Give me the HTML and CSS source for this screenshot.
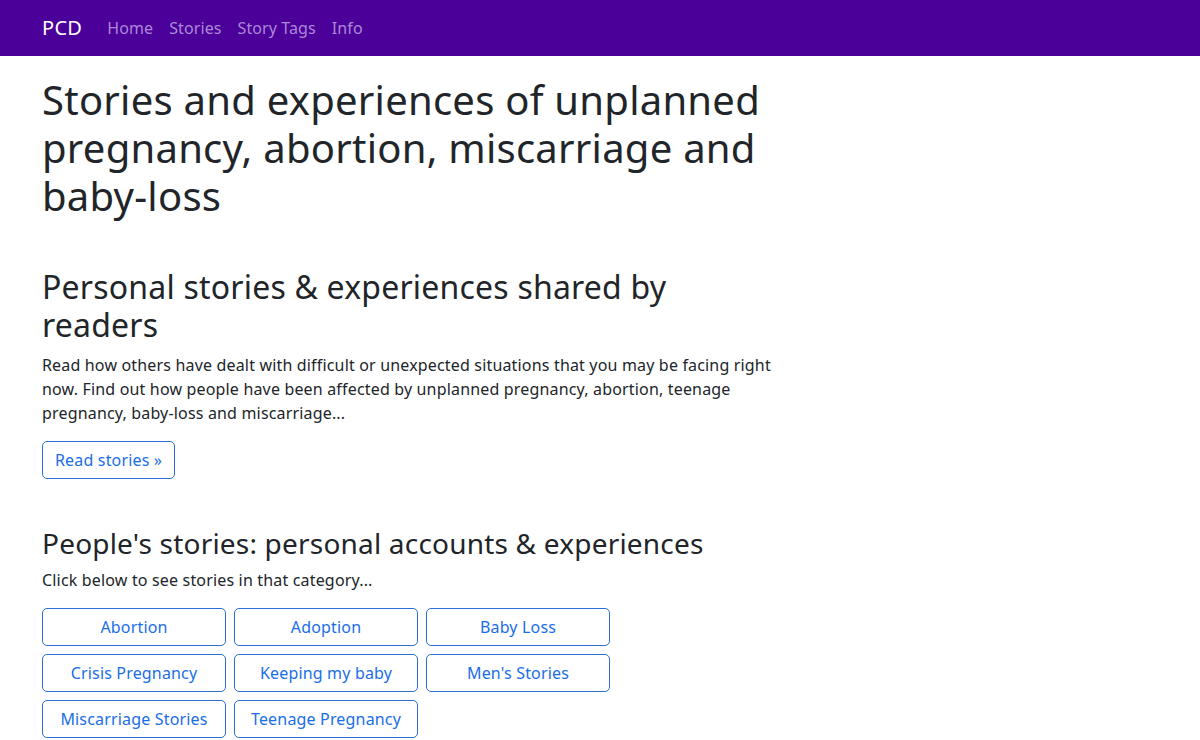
FILE: index.html
```html
<!DOCTYPE html>
<html lang="en">
<head>
<meta charset="utf-8">
<title>PCD - Stories and experiences</title>
<link rel="stylesheet" href="styles.css">
</head>
<body>
<nav class="navbar">
  <div class="container nav-inner">
    <a class="brand" href="#">PCD</a>
    <ul class="nav-links">
      <li><a href="#">Home</a></li>
      <li><a href="#">Stories</a></li>
      <li><a href="#">Story Tags</a></li>
      <li><a href="#">Info</a></li>
    </ul>
  </div>
</nav>
<main class="container">
  <div class="col">
    <h1 class="title">Stories and experiences of unplanned pregnancy, abortion, miscarriage and baby-loss</h1>
    <section class="section first">
      <h2 class="sub">Personal stories &amp; experiences shared by readers</h2>
      <p class="text">Read how others have dealt with difficult or unexpected situations that you may be facing right now. Find out how people have been affected by unplanned pregnancy, abortion, teenage pregnancy, baby-loss and miscarriage...</p>
      <a class="btn" href="#">Read stories »</a>
    </section>
    <section class="section second">
      <h3 class="sub3">People's stories: personal accounts &amp; experiences</h3>
      <p class="text">Click below to see stories in that category...</p>
      <div class="cat-grid">
        <a class="btn cat" href="#">Abortion</a>
        <a class="btn cat" href="#">Adoption</a>
        <a class="btn cat" href="#">Baby Loss</a>
        <a class="btn cat" href="#">Crisis Pregnancy</a>
        <a class="btn cat" href="#">Keeping my baby</a>
        <a class="btn cat" href="#">Men's Stories</a>
        <a class="btn cat" href="#">Miscarriage Stories</a>
        <a class="btn cat" href="#">Teenage Pregnancy</a>
      </div>
    </section>
  </div>
</main>
</body>
</html>
```
FILE: styles.css
```css
* { box-sizing: border-box; }
html, body { margin: 0; padding: 0; }
body {
  font-family: "Noto Sans", "Open Sans", sans-serif;
  font-size: 16px;
  line-height: 24px;
  color: #212529;
  background: #fff;
  letter-spacing: 0.17px;
}
a { text-decoration: none; }
.container {
  max-width: 1140px;
  margin: 0 auto;
  padding: 0 12px;
}
.navbar {
  background: #4a0099;
  height: 56px;
  display: flex;
  align-items: center;
}
.nav-inner {
  width: 100%;
  display: flex;
  align-items: center;
}
.brand {
  color: #fff;
  font-size: 20px;
  line-height: 30px;
  margin-right: 17px;
  letter-spacing: 0.3px;
}
.nav-links {
  list-style: none;
  margin: 0;
  padding: 0;
  display: flex;
}
.nav-links a {
  display: block;
  padding: 8px 8px;
  color: #ad88d8;
  letter-spacing: 0.1px;
}
.col { width: 736px; }
.title {
  font-size: 40px;
  line-height: 48px;
  font-weight: 400;
  margin: 20px 0 8px;
  letter-spacing: 0.25px;
}
.section.first { margin-top: 48px; }
.section.second { margin-top: 48px; }
.sub {
  font-size: 32px;
  line-height: 38.4px;
  font-weight: 400;
  margin: 0 0 8px;
  letter-spacing: 0.2px;
}
.sub3 {
  font-size: 28px;
  line-height: 33.6px;
  font-weight: 400;
  margin: 0 0 8px;
  letter-spacing: 0.2px;
}
.text { margin: 0 0 16px; }
.btn {
  display: inline-block;
  color: #1a6ee8;
  border: 1px solid #2c6fd6;
  border-radius: 5px;
  padding: 6px 12px;
  line-height: 24px;
  font-size: 16px;
  text-align: center;
  background: #fff;
}
.cat-grid {
  display: grid;
  grid-template-columns: repeat(3, 184px);
  gap: 8px;
}
.cat { display: block; }
```
